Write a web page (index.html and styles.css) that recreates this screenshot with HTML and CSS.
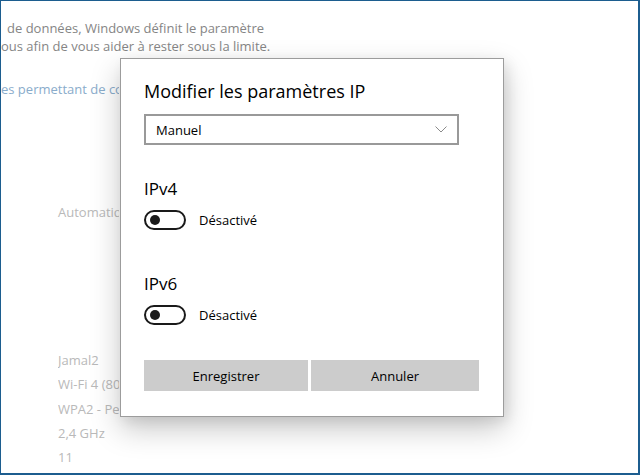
FILE: index.html
```html
<!DOCTYPE html>
<html lang="fr">
<head>
<meta charset="utf-8">
<title>Modifier les paramètres IP</title>
<link rel="stylesheet" href="styles.css">
</head>
<body>
<div class="window">
  <div class="page">
    <p class="desc desc-1">de données, Windows définit le paramètre</p>
    <p class="desc desc-2">ous afin de vous aider à rester sous la limite.</p>
    <p class="link clip">es permettant de contrôler l'utilisation des données</p>
    <p class="label label-auto clip">Automatique (DHCP)</p>
    <ul class="props">
      <li class="clip">Jamal2</li>
      <li class="clip">Wi-Fi 4 (802.11n)</li>
      <li class="clip">WPA2 - Personnel</li>
      <li class="clip">2,4 GHz</li>
      <li class="clip">11</li>
    </ul>
  </div>

  <div class="dialog" role="dialog" aria-label="Modifier les paramètres IP">
    <h1 class="dialog-title">Modifier les paramètres IP</h1>
    <div class="select">
      <span class="select-value">Manuel</span>
      <svg class="chevron" width="12" height="7" viewBox="0 0 12 7"><path d="M0.5 0.5 L6 6 L11.5 0.5" fill="none" stroke="#8a8a8a" stroke-width="1"/></svg>
    </div>

    <h2 class="section section-v4">IPv4</h2>
    <div class="toggle-row">
      <span class="toggle"><span class="knob"></span></span>
      <span class="toggle-label">Désactivé</span>
    </div>

    <h2 class="section section-v6">IPv6</h2>
    <div class="toggle-row">
      <span class="toggle"><span class="knob"></span></span>
      <span class="toggle-label">Désactivé</span>
    </div>

    <div class="actions">
      <button class="btn">Enregistrer</button>
      <button class="btn">Annuler</button>
    </div>
  </div>
</div>
</body>
</html>
```

FILE: styles.css
```css
* { box-sizing: border-box; }
html, body { margin: 0; padding: 0; background: #fff; }
body {
  font-family: "Open Sans", "Noto Sans", "Liberation Sans", sans-serif;
  color: #000;
}
.window {
  position: relative;
  width: 640px;
  height: 475px;
  overflow: hidden;
  background: #fff;
  border-top: 1px solid #1c5d8f;
  border-left: 1px solid #1c5d8f;
  border-right: 2px solid #1c5d8f;
  border-bottom: 2px solid #1c5d8f;
}
.page {
  padding-top: 18px;
  font-size: 13px;
  line-height: 18px;
  white-space: nowrap;
}
.page p { margin: 0; }
.clip {
  width: 118px;
  overflow: hidden;
}
.desc { color: #858585; }
.desc-1 { padding-left: 6px; }
.desc-2 { padding-left: 0; }
.page .link { color: #8aaccb; margin-top: 25px; }
.page .label-auto { color: #b9b9b9; padding-left: 57px; margin-top: 105px; }
.props {
  list-style: none;
  margin: 127px 0 0;
  padding: 0 0 0 57px;
  color: #b9b9b9;
  line-height: 24.3px;
}
.props .clip { width: 61px; }

.dialog {
  position: absolute;
  left: 119px;
  top: 57px;
  width: 384px;
  height: 359px;
  background: #fff;
  border: 1px solid #9c9c9c;
  box-shadow: 0 12px 28px rgba(0, 0, 0, 0.22), 4px 4px 12px rgba(0,0,0,0.08);
  padding: 19px 23px 0;
  display: flex;
  flex-direction: column;
}
.dialog-title {
  margin: 0;
  font-size: 18px;
  font-weight: 400;
  line-height: 26px;
  color: #000;
}
.select {
  margin-top: 10px;
  width: 315px;
  height: 31px;
  border: 2px solid #999;
  display: flex;
  align-items: center;
  justify-content: space-between;
  padding: 0 10px 0 10px;
  font-size: 13px;
}
.chevron { display: block; }
.section {
  margin: 0;
  font-size: 17px;
  font-weight: 400;
  line-height: 24px;
}
.section-v4 { margin-top: 32px; }
.section-v6 { margin-top: 42px; }
.toggle-row {
  display: flex;
  align-items: center;
  gap: 13px;
  margin-top: 9px;
  height: 20px;
  font-size: 13px;
}
.toggle {
  width: 42px;
  height: 20px;
  border: 2px solid #1a1a1a;
  border-radius: 10px;
  display: flex;
  align-items: center;
  padding-left: 4px;
}
.knob {
  width: 10px;
  height: 10px;
  border-radius: 50%;
  background: #1a1a1a;
}
.actions {
  margin-top: 35px;
  display: grid;
  grid-template-columns: 164px 168px;
  gap: 3px;
}
.btn {
  height: 31px;
  border: 0;
  background: #cccccc;
  font-family: inherit;
  font-size: 13px;
  color: #000;
  padding: 0;
}
```
